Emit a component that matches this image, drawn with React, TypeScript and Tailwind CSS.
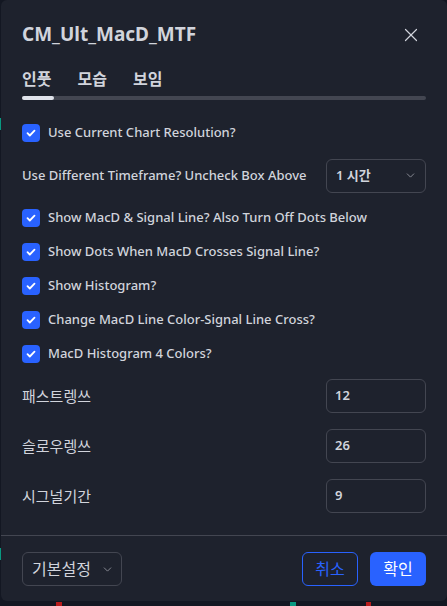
import { ChevronDown, X } from 'lucide-react';

const checks = [
    'Show MacD & Signal Line? Also Turn Off Dots Below',
    'Show Dots When MacD Crosses Signal Line?',
    'Show Histogram?',
    'Change MacD Line Color-Signal Line Cross?',
    'MacD Histogram 4 Colors?',
];

const numbers = [
    { label: '패스트렝쓰', value: '12' },
    { label: '슬로우렝쓰', value: '26' },
    { label: '시그널기간', value: '9' },
];

const font = { fontFamily: '"Noto Sans", "Noto Sans CJK KR", sans-serif' };

function Check({ label }: { label: string }) {
    return (
        <div className="flex items-center h-[34px] gap-[8px]">
            <span className="w-[18px] h-[18px] rounded-[4px] bg-[#2962ff] flex items-center justify-center shrink-0">
                <svg width="12" height="12" viewBox="0 0 12 12" fill="none">
                    <path d="M2.5 6.2l2.3 2.3 4.7-4.8" stroke="#fff" strokeWidth="1.8" strokeLinecap="round" strokeLinejoin="round" />
                </svg>
            </span>
            <span className="text-[13px] font-medium text-[#d1d4dc]">{label}</span>
        </div>
    );
}

export default function App() {
    return (
        <div className="relative w-[447px] h-[606px] bg-[#131722] overflow-hidden" style={font}>
            {/* chart scraps peeking out from behind the dialog */}
            <span className="absolute left-0 top-[118px] w-[2px] h-[12px] bg-[#089981]" />
            <span className="absolute left-0 top-[548px] w-[2px] h-[12px] bg-[#089981]" />
            <span className="absolute left-[56px] top-[602px] w-[6px] h-[4px] bg-[#b71c1c]" />
            <span className="absolute left-[290px] top-[602px] w-[6px] h-[4px] bg-[#089981]" />
            <span className="absolute left-[366px] top-[602px] w-[5px] h-[4px] bg-[#b71c1c]" />

            <div className="relative ml-px w-[446px] h-[601px] rounded-[6px] bg-[#1e222d] flex flex-col">
                <div className="flex items-center justify-between pl-[21px] pr-[25px] pt-[17px] h-[52px]">
                    <h1 className="text-[19px] font-bold text-[#d1d4dc]">CM_Ult_MacD_MTF</h1>
                    <X className="w-[22px] h-[22px] text-[#d1d4dc]" strokeWidth={1.3} />
                </div>

                <div className="px-[21px] pt-[14px]">
                    <div className="flex gap-[26px] text-[16px] font-semibold text-[#d1d4dc] h-[26px] items-center">
                        <span>인풋</span>
                        <span>모습</span>
                        <span>보임</span>
                    </div>
                    <div className="mt-[4px] h-[4px] rounded-full bg-[#434651] flex">
                        <div className="w-[32px] h-full rounded-full bg-[#e0e3eb]" />
                    </div>
                </div>

                <div className="flex-1 px-[21px] pt-[16px]">
                    <Check label="Use Current Chart Resolution?" />
                    <div className="flex items-center justify-between h-[51px]">
                        <span className="text-[13px] font-medium text-[#d1d4dc]">Use Different Timeframe? Uncheck Box Above</span>
                        <div className="w-[100px] h-[34px] border border-[#434651] rounded-[6px] flex items-center justify-between pl-[9px] pr-[8px] text-[13px] font-semibold text-[#d1d4dc]">
                            <span>1 시간</span>
                            <ChevronDown className="w-[13px] h-[13px] text-[#9598a1]" strokeWidth={1.6} />
                        </div>
                    </div>
                    {checks.map((c) => (
                        <Check key={c} label={c} />
                    ))}
                    <div className="mt-[8px] flex flex-col gap-[16px]">
                        {numbers.map((n) => (
                            <div className="flex items-center justify-between" key={n.label}>
                                <span className="text-[15px] text-[#d1d4dc]">{n.label}</span>
                                <div className="w-[100px] h-[34px] border border-[#434651] rounded-[6px] flex items-center px-[8px] text-[13px] font-semibold text-[#d1d4dc]">
                                    {n.value}
                                </div>
                            </div>
                        ))}
                    </div>
                </div>

                <div className="border-t border-[#434651] h-[66px] px-[21px] pt-[16px] flex justify-between">
                    <div className="w-[100px] h-[34px] border border-[#434651] rounded-[6px] flex items-center justify-between pl-[9px] pr-[7px] text-[16px] text-[#d1d4dc]">
                        <span>기본설정</span>
                        <ChevronDown className="w-[13px] h-[13px] text-[#9598a1]" strokeWidth={1.6} />
                    </div>
                    <div className="flex gap-[12px]">
                        <button className="w-[56px] h-[34px] rounded-[6px] border border-[#2962ff] text-[#2962ff] text-[16px]">취소</button>
                        <button className="w-[56px] h-[34px] rounded-[6px] bg-[#2962ff] text-white text-[16px]">확인</button>
                    </div>
                </div>
            </div>
        </div>
    );
}
